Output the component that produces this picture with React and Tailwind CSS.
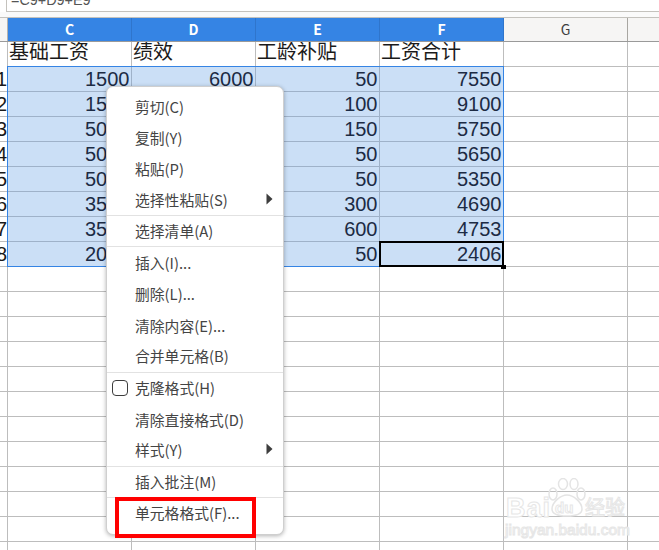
const cols = ["C", "D", "E", "F"];

const rows = [
  ["1", "1500", "6000", "50", "7550"],
  ["2", "1500", "7500", "100", "9100"],
  ["3", "5000", "600", "150", "5750"],
  ["4", "5000", "600", "50", "5650"],
  ["5", "5000", "300", "50", "5350"],
  ["6", "3500", "890", "300", "4690"],
  ["7", "3500", "653", "600", "4753"],
  ["8", "2000", "356", "50", "2406"],
];

const menu = [
  { label: "剪切(C)" },
  { label: "复制(Y)" },
  { label: "粘贴(P)" },
  { label: "选择性粘贴(S)", arrow: true, sep: true },
  { label: "选择清单(A)", sep: true },
  { label: "插入(I)..." },
  { label: "删除(L)..." },
  { label: "清除内容(E)..." },
  { label: "合并单元格(B)", sep: true },
  { label: "克隆格式(H)", check: true },
  { label: "清除直接格式(D)" },
  { label: "样式(Y)", arrow: true, sep: true },
  { label: "插入批注(M)", sep: true },
  { label: "单元格格式(F)..." },
];

function ColHead({ name, active }) {
  return (
    <div
      className={
        active
          ? "w-[124px] shrink-0 h-full flex items-center justify-center bg-[#3584e4] border-r border-[#2f75cc] text-white font-bold text-[14px]"
          : "w-[124px] shrink-0 h-full flex items-center justify-center bg-[#f6f5f4] border-r border-[#a8a6a1] text-[#3d3d3d] text-[14px]"
      }
    >
      {name}
    </div>
  );
}

function Cell({ children, selected }) {
  return (
    <div
      className={
        selected
          ? "w-[124px] shrink-0 h-full flex items-end justify-end pr-[1.5px] border-r border-b border-[#9fb2c9] bg-[#cbdff6] text-[#1c2b44] text-[20px] leading-[23px] font-['Liberation_Sans',sans-serif]"
          : "w-[124px] shrink-0 h-full border-r border-b border-[#bdbdbd]"
      }
    >
      {children}
    </div>
  );
}

function EmptyRow() {
  return (
    <div className="flex h-[25px]">
      <div className="w-[8px] shrink-0 border-r border-b border-[#bdbdbd]" />
      <Cell />
      <Cell />
      <Cell />
      <Cell />
      <Cell />
      <Cell />
    </div>
  );
}

function MenuItem({ item }) {
  return (
    <div
      className={
        "relative h-[31.3px] flex items-center pl-[28px] text-[14.8px] text-[#444444] " +
        (item.sep ? "border-b border-[#e2e2e2]" : "")
      }
    >
      {item.check && (
        <span className="absolute left-[5px] top-[7px] w-[16px] h-[16px] rounded-[4px] border border-[#3d3d3d] bg-white" />
      )}
      <span>{item.label}</span>
      {item.arrow && (
        <svg className="absolute right-[10px] top-[8px]" width="7" height="12" viewBox="0 0 7 12">
          <path d="M0.5 0.5 L6.5 6 L0.5 11.5 Z" fill="#3d3d3d" />
        </svg>
      )}
    </div>
  );
}

export default function App() {
  return (
    <div className="relative w-[659px] h-[550px] overflow-hidden bg-white font-['Noto_Sans_CJK_SC','Noto_Sans',sans-serif]">
      {/* formula bar, cut by the top of the picture */}
      <div className="h-[12px] ml-[6px] pl-[4px] border-l border-b border-[#c4c2bd] overflow-hidden">
        <div className="mt-[-9px] text-[14.4px] leading-[18px] text-[#555] font-['Liberation_Sans',sans-serif]">
          =C9+D9+E9
        </div>
      </div>
      <div className="h-[6px] bg-[#fafafa] border-b border-[#c4c2bd]" />

      {/* column headers */}
      <div className="flex h-[24px] border-b border-[#9a9a9a]">
        <div className="w-[8px] shrink-0 h-full bg-[#f6f5f4] border-r border-[#b5b3ae]" />
        {cols.map((c) => (
          <ColHead key={c} name={c} active />
        ))}
        <ColHead name="G" />
        <ColHead name="" />
      </div>

      {/* title row */}
      <div className="flex h-[25px]">
        <div className="w-[8px] shrink-0 border-r border-[#bdbdbd]" />
        {["基础工资", "绩效", "工龄补贴", "工资合计"].map((t) => (
          <div
            key={t}
            className="w-[124px] shrink-0 h-full pl-[1px] border-r border-[#bdbdbd] text-[20px] leading-[18px] text-[#1a1a1a] overflow-hidden"
          >
            {t}
          </div>
        ))}
        <Cell />
        <Cell />
      </div>

      {/* data rows */}
      <div className="relative">
        {rows.map((r) => (
          <div key={r[0]} className="flex h-[25px]">
            <div className="w-[8px] shrink-0 flex justify-end items-end border-r border-b border-[#bdbdbd] text-[20px] leading-[23px] text-[#1a1a1a] overflow-hidden font-['Liberation_Sans',sans-serif]">
              {r[0]}
            </div>
            <Cell selected>{r[1]}</Cell>
            <Cell selected>{r[2]}</Cell>
            <Cell selected>{r[3]}</Cell>
            <Cell selected>{r[4]}</Cell>
            <Cell />
            <Cell />
          </div>
        ))}
        {/* selection outline and cursor cell */}
        <div className="absolute left-[7px] top-[-1px] w-[497px] h-[201px] border border-[#3584e4] pointer-events-none" />
        <div className="absolute left-[379px] top-[174px] w-[125px] h-[26px] border-2 border-black pointer-events-none" />
        <div className="absolute left-[501px] top-[198px] w-[5px] h-[4px] bg-black" />
      </div>

      {Array.from({ length: 12 }, (_, i) => (
        <EmptyRow key={i} />
      ))}

      {/* context menu */}
      <div className="absolute left-[106px] top-[86px] w-[178px] pt-[4px] pb-[5px] rounded-[7px] bg-white border border-[#cfcfcf] shadow-[0_1px_4px_rgba(0,0,0,0.3)]">
        {menu.map((item) => (
          <MenuItem key={item.label} item={item} />
        ))}
      </div>

      {/* red annotation box */}
      <div className="absolute left-[115px] top-[497px] w-[141px] h-[41px] border-[4px] border-[#ff0000]" />

      {/* watermark */}
      <div className="absolute left-[505px] top-[478px] w-[150px] h-[70px] text-white [-webkit-text-stroke:1px_#e6e6e6] pointer-events-none">
        <svg className="absolute left-[40px] top-0" width="44" height="40" viewBox="0 0 44 40" fill="none" stroke="#e4e4e4" strokeWidth="1.5">
          <ellipse cx="8" cy="16" rx="4" ry="6" />
          <ellipse cx="18" cy="6" rx="4.5" ry="5.5" />
          <ellipse cx="29" cy="6" rx="4" ry="5.5" />
          <ellipse cx="36" cy="16" rx="4" ry="6" />
          <path d="M22 17c-6 0-15 7-15 14 0 5 5 7 15 7s15-2 15-7c0-7-9-14-15-14z" />
        </svg>
        <span className="absolute left-[1px] top-[15px] text-[27px] leading-[30px] font-bold tracking-[1px] font-['Liberation_Sans',sans-serif]">Bai</span>
        <span className="absolute left-[50px] top-[21px] text-[15px] leading-[18px] font-bold font-['Liberation_Sans',sans-serif]">du</span>
        <span className="absolute left-[80px] top-[15px] text-[20px] leading-[28px]">经验</span>
        <span className="absolute left-[0px] top-[43px] text-[15.5px] leading-[18px] font-['Liberation_Sans',sans-serif]">jingyan.baidu.com</span>
      </div>
    </div>
  );
}
